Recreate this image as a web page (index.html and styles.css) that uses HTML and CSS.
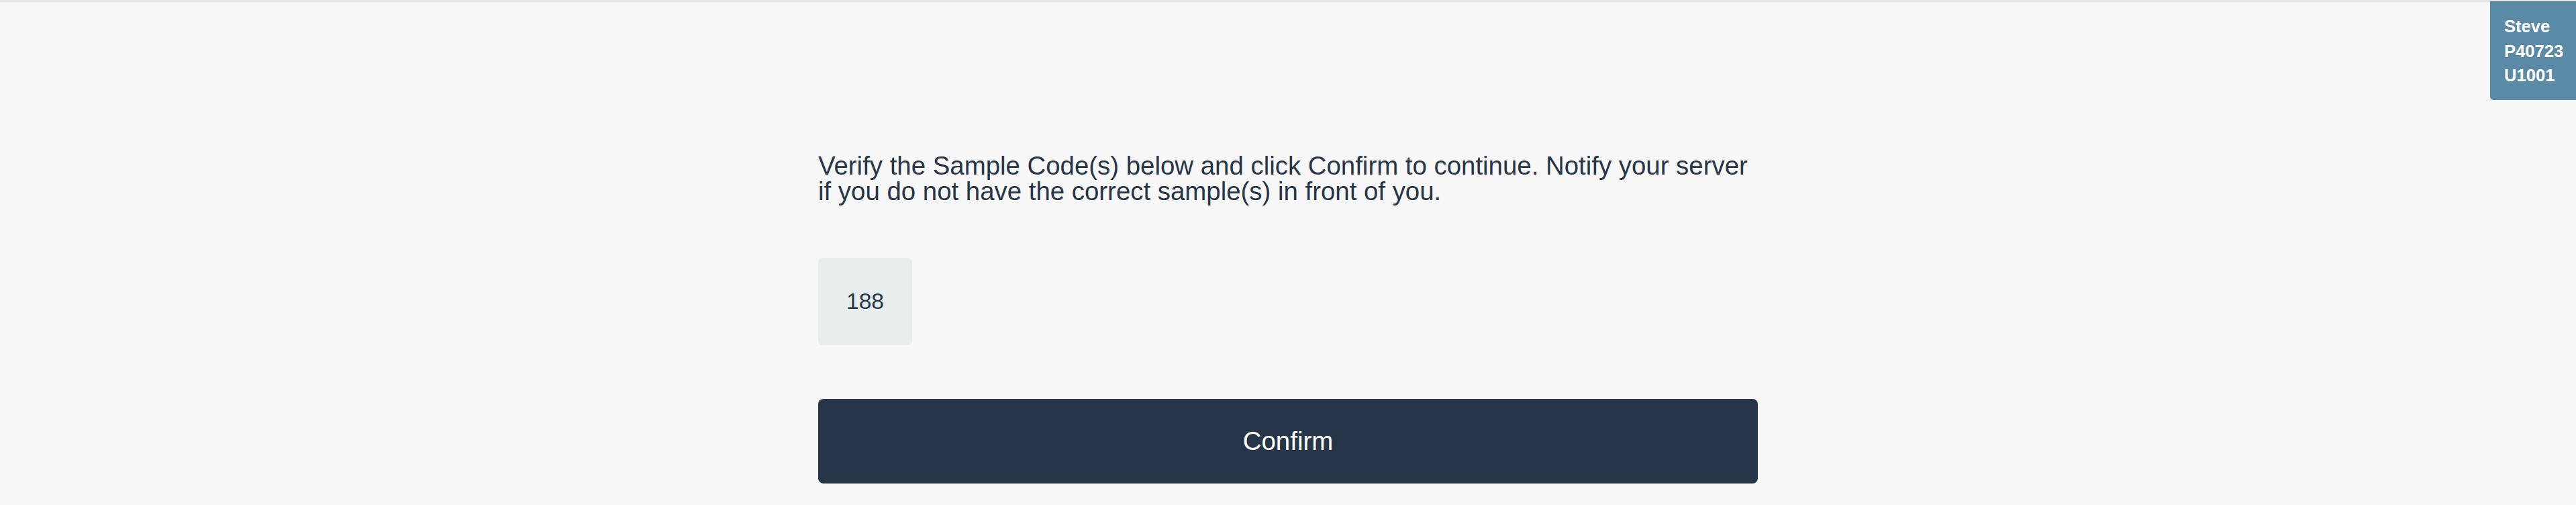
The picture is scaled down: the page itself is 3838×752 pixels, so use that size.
FILE: index.html
```html
<!DOCTYPE html>
<html lang="en">
<head>
<meta charset="utf-8">
<title>Verify Sample</title>
<link rel="stylesheet" href="styles.css">
</head>
<body>
<div class="topline"></div>
<div class="badge">
  <div>Steve</div>
  <div>P40723</div>
  <div>U1001</div>
</div>
<main class="panel">
  <p class="intro">Verify the Sample Code(s) below and click Confirm to continue. Notify your server if you do not have the correct sample(s) in front of you.</p>
  <div class="codes">
    <div class="code">188</div>
  </div>
  <button class="confirm" type="button">Confirm</button>
</main>
</body>
</html>
```

FILE: styles.css
```css
html, body {
  margin: 0;
  padding: 0;
  background: #f7f7f7;
}
body {
  padding-top: 1px;
  font-family: "Liberation Sans", Arial, Helvetica, sans-serif;
  color: #263547;
}
.topline {
  height: 1px;
  background: #a9a9a9;
}
.badge {
  position: fixed;
  top: 2px;
  right: 0;
  width: 128px;
  height: 147px;
  box-sizing: border-box;
  padding: 19px 0 0 21px;
  background: #5b8aa7;
  color: #ffffff;
  font-weight: bold;
  font-size: 25.6px;
  line-height: 36.5px;
  border-bottom-left-radius: 5px;
}
.panel {
  width: 1400px;
  margin: 0 auto;
  padding-top: 226px;
  display: flex;
  flex-direction: column;
}
.intro {
  margin: 0;
  font-size: 38.4px;
  line-height: 38px;
}
.codes {
  display: flex;
  gap: 20px;
  margin-top: 80px;
}
.code {
  width: 140px;
  height: 130px;
  display: flex;
  align-items: center;
  justify-content: center;
  background: #e8eded;
  border-radius: 7px;
  font-size: 33.6px;
}
.confirm {
  margin-top: 80px;
  height: 126px;
  width: 100%;
  border: 0;
  border-radius: 8px;
  background: #263547;
  color: #ffffff;
  font-family: "Liberation Sans", Arial, Helvetica, sans-serif;
  font-size: 38.4px;
  padding: 0;
}
```
